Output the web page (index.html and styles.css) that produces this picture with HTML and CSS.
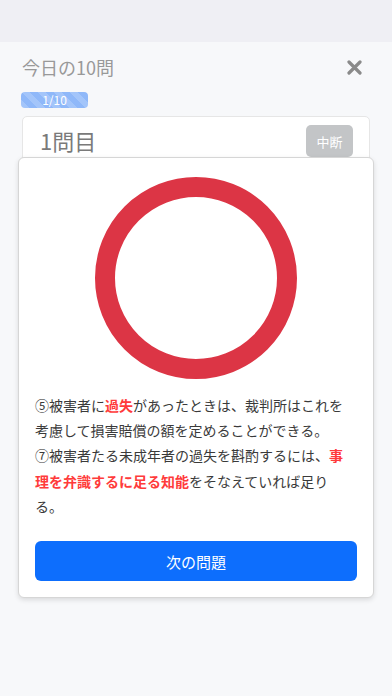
FILE: index.html
```html
<!DOCTYPE html>
<html lang="ja">
<head>
    <meta charset="UTF-8">
    <meta name="viewport" content="width=device-width, initial-scale=1.0">
    <title>今日の10問</title>
    <link rel="stylesheet" href="styles.css">
</head>
<body>
    <div class="topbar"></div>
    <div class="page">
        <div class="header">
            <div class="title">今日の10問</div>
            <button class="close" aria-label="閉じる">
                <svg width="15" height="15" viewBox="0 0 15 15">
                    <path d="M2 2 L13 13 M13 2 L2 13" stroke="#8a8a8a" stroke-width="3.2" stroke-linecap="round"/>
                </svg>
            </button>
        </div>
        <div class="progress">1/10</div>
        <div class="question">
            <div class="question-title">1問目</div>
            <button class="pause">中断</button>
        </div>
    </div>

    <div class="result">
        <div class="mark"></div>
        <p class="explain">⑤被害者に<span class="hl">過失</span>があったときは、裁判所はこれを考慮して損害賠償の額を定めることができる。<br>⑦被害者たる未成年者の過失を斟酌するには、<span class="hl">事理を弁識するに足る知能</span>をそなえていれば足りる。</p>
        <button class="next">次の問題</button>
    </div>
</body>
</html>
```

FILE: styles.css
```css
body {
    margin: 0;
    font-family: "Noto Sans CJK JP", "Noto Sans", sans-serif;
    background-color: #f7f8fa;
    color: #333;
    height: 696px;
    overflow: hidden;
    position: relative;
}

.topbar {
    height: 42px;
    background-color: #efeff4;
}

.page {
    padding: 0 22px;
}

.header {
    display: flex;
    justify-content: space-between;
    align-items: center;
    height: 50px;
}

.title {
    font-size: 18px;
    color: #999;
}

.close {
    border: none;
    background: none;
    padding: 0;
    margin-right: 8px;
    width: 15px;
    height: 15px;
    display: flex;
}

.progress {
    width: 67px;
    height: 16px;
    margin-left: -1px;
    border-radius: 4px;
    background-color: #8fb8f9;
    background-image: linear-gradient(45deg, rgba(255,255,255,.18) 25%, transparent 25%, transparent 50%, rgba(255,255,255,.18) 50%, rgba(255,255,255,.18) 75%, transparent 75%, transparent);
    background-size: 16px 16px;
    color: #fff;
    font-size: 12px;
    line-height: 16px;
    text-align: center;
}

.question {
    margin-top: 8px;
    background-color: #fff;
    border: 1px solid #e6e6e6;
    border-radius: 5px;
    height: 80px;
    display: flex;
    justify-content: space-between;
    align-items: flex-start;
    padding: 8px 16px 0 17px;
}

.question-title {
    font-size: 22px;
    color: #7a7a7a;
    line-height: 30px;
}

.pause {
    width: 47px;
    height: 32px;
    border: none;
    border-radius: 5px;
    background-color: #c3c5c7;
    color: #fff;
    font-family: inherit;
    font-size: 13px;
}

.result {
    position: absolute;
    top: 157px;
    left: 18px;
    width: 356px;
    box-sizing: border-box;
    background-color: #fff;
    border: 1px solid #d6d6d6;
    border-radius: 6px;
    box-shadow: 0 2px 5px rgba(0, 0, 0, 0.12);
    padding: 19px 16px 16px;
}

.mark {
    width: 202px;
    height: 202px;
    box-sizing: border-box;
    border: 20px solid #dc3545;
    border-radius: 50%;
    margin: 0 auto;
}

.explain {
    margin: 14px 6px 22px 0;
    font-size: 14px;
    line-height: 25.2px;
    color: #3a3a3a;
}

.hl {
    color: #ff3b3b;
    font-weight: bold;
}

.next {
    display: block;
    width: 100%;
    height: 40px;
    border: none;
    border-radius: 6px;
    background-color: #0d6efd;
    color: #fff;
    font-family: inherit;
    font-size: 15px;
}
```
